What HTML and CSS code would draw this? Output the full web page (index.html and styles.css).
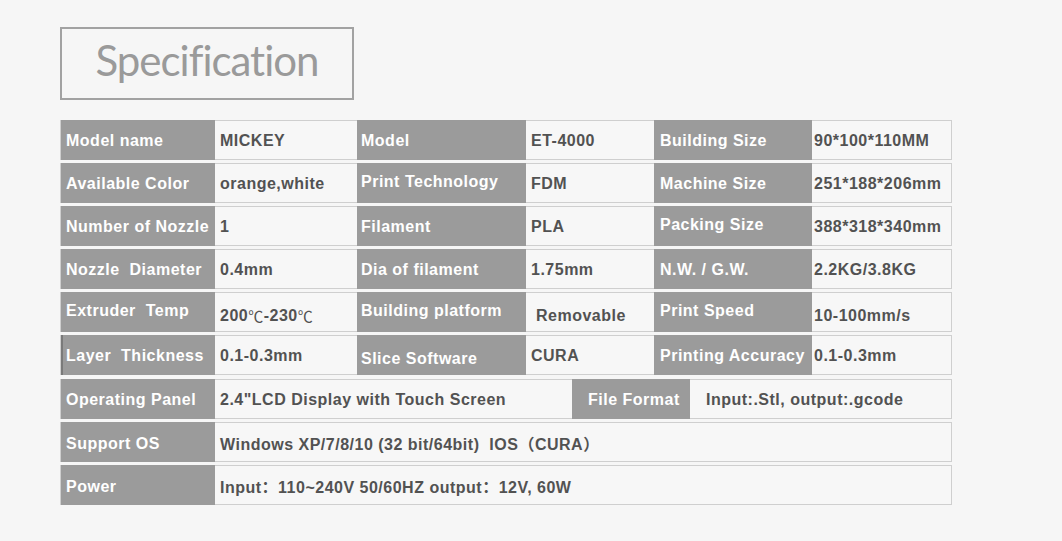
FILE: index.html
```html
<!DOCTYPE html>
<html lang="en">
  <head>
    <meta charset="UTF-8" />
    <meta name="viewport" content="width=device-width, initial-scale=1.0" />
    <title>Specification</title>
    <link rel="stylesheet" href="styles.css">
  </head>
  <body>
    <div class="page">
      <div class="title-box">
        <h1>Specification</h1>
      </div>

      <div class="spec">
        <div class="row row-six">
          <div class="k">Model name</div>
          <div class="v">MICKEY</div>
          <div class="k">Model</div>
          <div class="v">ET-4000</div>
          <div class="k">Building Size</div>
          <div class="v">90*100*110MM</div>
        </div>
        <div class="row row-six">
          <div class="k">Available Color</div>
          <div class="v">orange,white</div>
          <div class="k up">Print Technology</div>
          <div class="v">FDM</div>
          <div class="k">Machine Size</div>
          <div class="v">251*188*206mm</div>
        </div>
        <div class="row row-six">
          <div class="k">Number of Nozzle</div>
          <div class="v">1</div>
          <div class="k">Filament</div>
          <div class="v">PLA</div>
          <div class="k up">Packing Size</div>
          <div class="v">388*318*340mm</div>
        </div>
        <div class="row row-six">
          <div class="k">Nozzle  Diameter</div>
          <div class="v">0.4mm</div>
          <div class="k">Dia of filament</div>
          <div class="v">1.75mm</div>
          <div class="k">N.W. / G.W.</div>
          <div class="v">2.2KG/3.8KG</div>
        </div>
        <div class="row row-six">
          <div class="k up">Extruder  Temp</div>
          <div class="v down">200<span class="unit">℃</span>-230<span class="unit">℃</span></div>
          <div class="k up">Building platform</div>
          <div class="v down wide-pad">Removable</div>
          <div class="k up">Print Speed</div>
          <div class="v down">10-100mm/s</div>
        </div>
        <div class="row row-six">
          <div class="k edge">Layer  Thickness</div>
          <div class="v">0.1-0.3mm</div>
          <div class="k down">Slice Software</div>
          <div class="v">CURA</div>
          <div class="k">Printing Accuracy</div>
          <div class="v">0.1-0.3mm</div>
        </div>
        <div class="row row-four">
          <div class="k">Operating Panel</div>
          <div class="v">2.4"LCD Display with Touch Screen</div>
          <div class="k indent">File Format</div>
          <div class="v indent">Input:.Stl, output:.gcode</div>
        </div>
        <div class="row row-two">
          <div class="k low">Support OS</div>
          <div class="v">Windows XP/7/8/10 (32 bit/64bit)  IOS（CURA）</div>
        </div>
        <div class="row row-two">
          <div class="k low">Power</div>
          <div class="v">Input：110~240V 50/60HZ output：12V, 60W</div>
        </div>
      </div>
    </div>
  </body>
</html>
```

FILE: styles.css
```css
body {
  margin: 0;
  background-color: #f6f6f6;
  font-family: "Liberation Sans", Arial, "Noto Sans CJK SC", sans-serif;
}
.page {
  padding: 27px 0 0 60px;
}
.title-box {
  width: 294px;
  height: 73px;
  box-sizing: border-box;
  border: 2px solid #a2a2a2;
  display: flex;
  align-items: center;
  justify-content: center;
}
.title-box h1 {
  margin: 0 0 8px 0;
  font-family: Lato, "Open Sans", sans-serif;
  font-weight: 400;
  font-size: 42px;
  color: #9a9a9a;
  letter-spacing: -1px;
}
.spec {
  margin-top: 20px;
  width: 892px;
  display: flex;
  flex-direction: column;
  gap: 3.1px;
}
.row {
  display: grid;
  height: 40px;
  box-sizing: border-box;
  border: 1px solid #cfcfcf;
  background-color: #f7f7f7;
}
.row-six {
  grid-template-columns: 154px 142px 169px 128px 158px 1fr;
}
.row-four {
  grid-template-columns: 154px 357px 118px 1fr;
}
.row-two {
  grid-template-columns: 154px 1fr;
}
.k,
.v {
  display: flex;
  align-items: center;
  white-space: pre;
  font-weight: bold;
  letter-spacing: 0.5px;
  margin-top: -1px;
  margin-bottom: -1px;
  padding-top: 2px;
}
.k {
  background-color: #9b9b9b;
  color: #fff;
  font-size: 16px;
  padding-left: 5px;
}
.v {
  color: #525252;
  font-size: 16px;
  padding-left: 5px;
}
.unit {
  font-weight: normal;
  font-family: "Noto Sans CJK SC", sans-serif;
  font-size: 15px;
}
.row-six .k:nth-child(3) {
  padding-left: 4px;
}
.row-six .k:nth-child(5) {
  padding-left: 6px;
}
.row-six .v:nth-child(6) {
  padding-left: 2px;
}
.wide-pad {
  padding-left: 10px;
}
.indent {
  padding-left: 16px;
}
.up {
  padding-top: 0;
  padding-bottom: 2px;
}
.down {
  padding-top: 7px;
}
.low {
  padding-top: 5px;
}
.edge {
  border-left: 2px solid #7a7a7a;
  padding-left: 3px;
}
```
